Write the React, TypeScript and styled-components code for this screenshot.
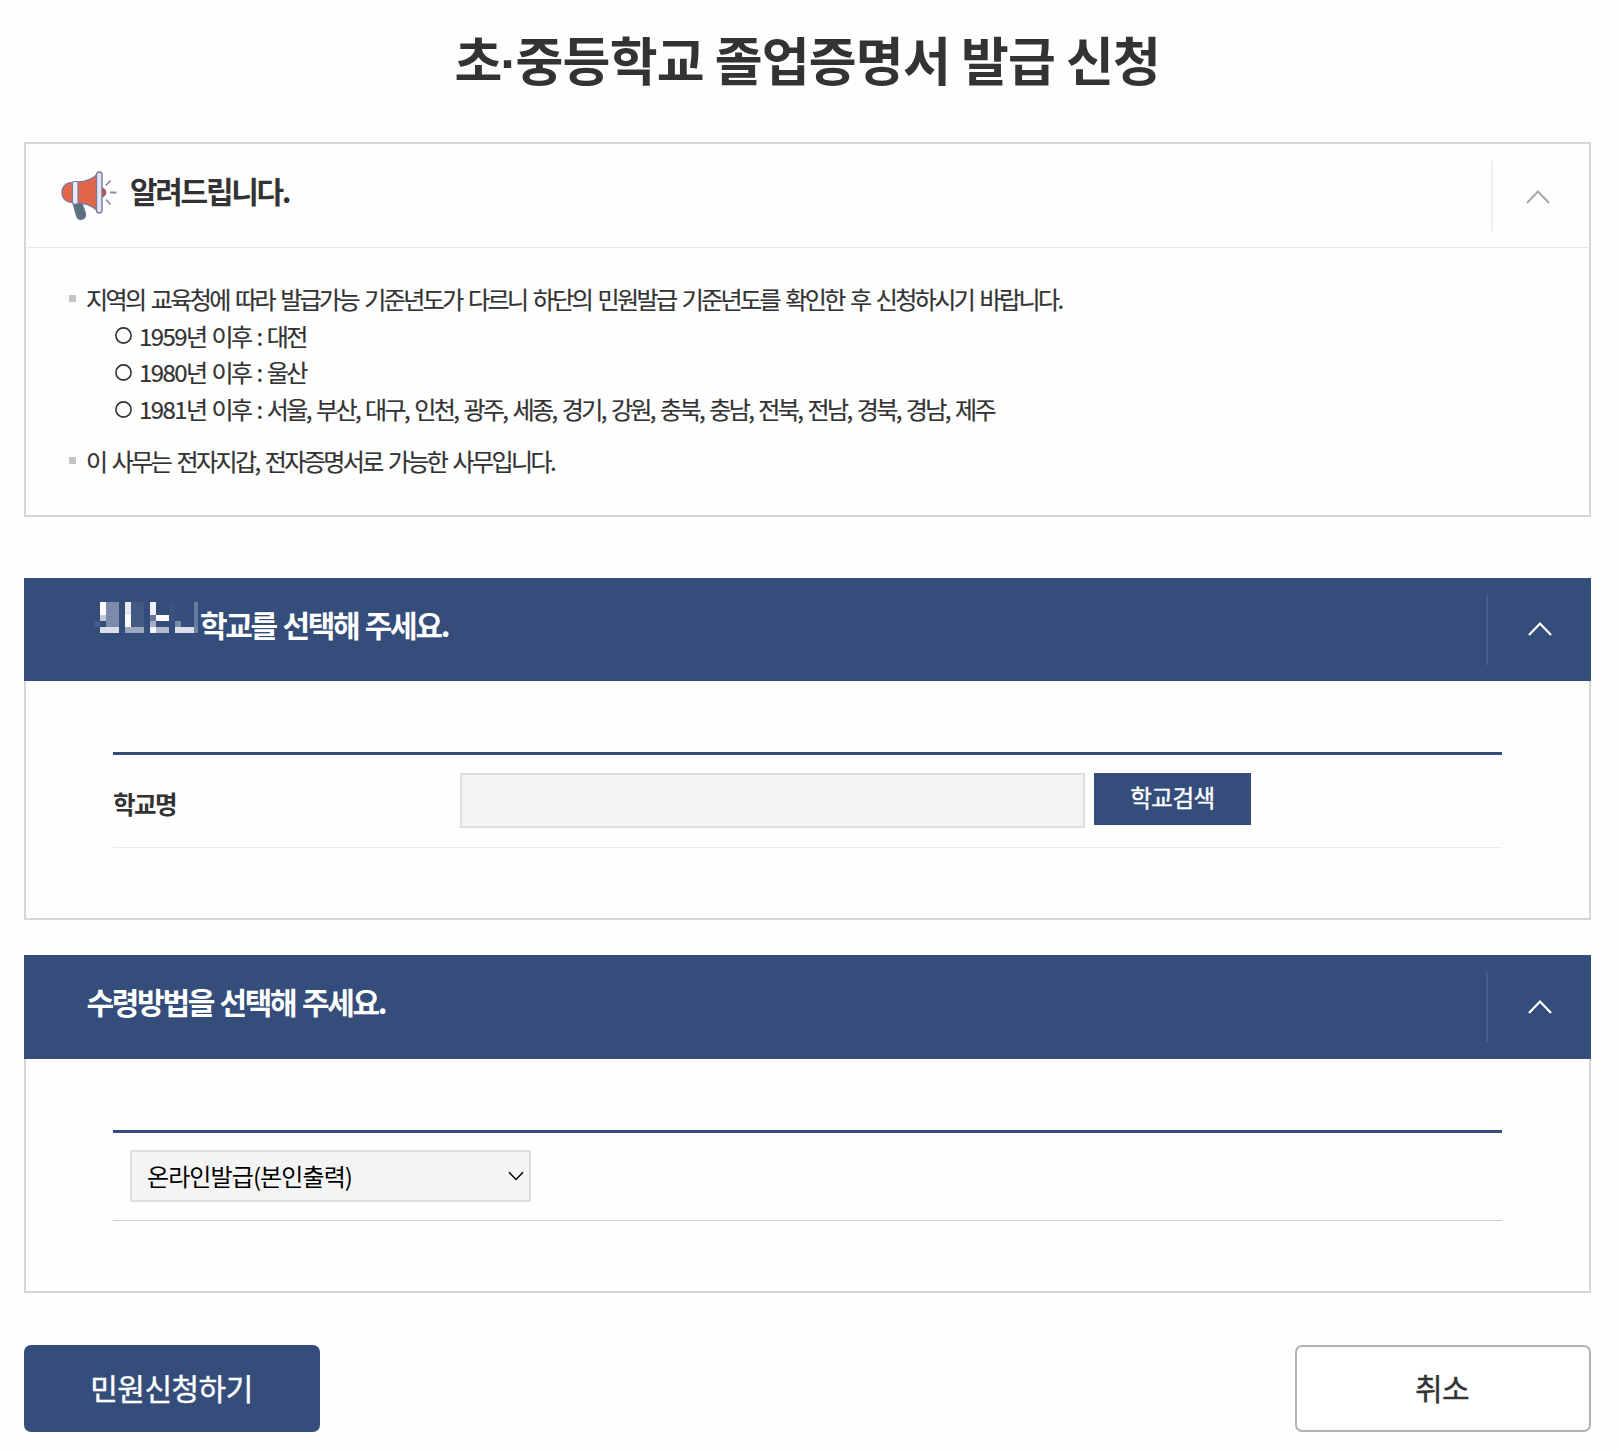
import { useState } from "react";
import styled, { createGlobalStyle, css } from "styled-components";

const GlobalStyle = createGlobalStyle`
  * {
    box-sizing: border-box;
  }

  body {
    margin: 0;
    background: #fefefe;
    color: #333;
    font-family: "Noto Sans CJK KR", sans-serif;
  }

  h1, h2, p, ul {
    margin: 0;
    padding: 0;
  }

  ul {
    list-style: none;
  }

  button, input, select {
    font-family: inherit;
  }
`;

const Page = styled.main`
  width: 1620px;
  height: 1452px;
  padding: 0 29.5px 0 24px;
`;

const PageTitle = styled.h1`
  height: 142px;
  padding-top: 21px;
  font-size: 52px;
  line-height: 76px;
  font-weight: 700;
  letter-spacing: -0.8px;
  text-align: center;
  white-space: nowrap;
`;

const MiddleDot = styled.span`
  margin: 0 -1.2px;
  font-family: "Liberation Sans", sans-serif;
  line-height: 1;
`;

const Panel = styled.section<{ $height: number; $gap: number }>`
  height: ${({ $height }) => $height}px;
  margin-bottom: ${({ $gap }) => $gap}px;
  border: 2px solid #d6d6d6;
  display: flex;
  flex-direction: column;
`;

const NoticeHeader = styled.header`
  height: 104px;
  padding: 17px 0 0 34.5px;
  border-bottom: 1px solid #e8e8e8;
  display: flex;
`;

const BlueHeader = styled.header<{ $indent: number; $height: number }>`
  height: ${({ $height }) => $height}px;
  margin: -2px -2px 0;
  padding: 17px 0 0 ${({ $indent }) => $indent}px;
  background: #344d7a;
  color: #fff;
  display: flex;
`;

const PanelTitle = styled.h2`
  flex: 1;
  font-size: 30px;
  line-height: 58px;
  font-weight: 700;
  letter-spacing: -2.3px;
  word-spacing: 2px;
  white-space: nowrap;
`;

const ToggleButton = styled.button<{ $blue?: boolean }>`
  width: 97.5px;
  height: 70px;
  padding: 1px 6px 0 0;
  border: 0;
  border-left: 2px solid #eee;
  background: none;
  color: #aaa;
  display: flex;
  align-items: center;
  justify-content: center;

  ${({ $blue }) =>
    $blue &&
    css`
      width: 104.5px;
      padding: 0 0 1px 1px;
      border-color: #485e87;
      color: #fff;
    `}
`;

const NoticeIcon = styled.svg`
  width: 56px;
  height: 50px;
  margin: 10px 13.5px 0 0;
`;

const Mosaic = styled.svg`
  width: 106px;
  height: 32px;
  margin-top: 7px;
`;

const NoticeList = styled.ul`
  padding: 33px 0 0 43px;
  font-size: 24px;
  line-height: 36.6px;
  letter-spacing: -2.6px;
  word-spacing: 3.5px;
  white-space: nowrap;
  -webkit-text-stroke: 0.2px;
`;

const NoticeItem = styled.li`
  margin-bottom: 15.5px;
  display: flex;

  &::before {
    content: "";
    width: 7px;
    height: 7px;
    margin: 14px 10px 0 0;
    background: #c4c4c4;
  }
`;

const YearLine = styled.p`
  padding-left: 29px;
  display: flex;
  align-items: center;
  white-space: pre;
  word-spacing: 3.35px;
`;

const YearBullet = styled.svg`
  width: 17px;
  height: 17px;
  margin-right: 7px;
`;

const YearNumber = styled.span`
  letter-spacing: -1.6px;
`;

const FormTable = styled.div<{ $height: number; $line: string }>`
  height: ${({ $height }) => $height}px;
  margin: 71px 87px 0 87px;
  border-top: 3.5px solid #344d7a;
  border-bottom: 1.5px solid ${({ $line }) => $line};
  display: flex;
  align-items: flex-start;
`;

const FieldLabel = styled.label`
  width: 347px;
  padding-top: 31px;
  font-size: 24.5px;
  line-height: 36px;
  font-weight: 700;
  letter-spacing: -1.5px;
`;

const SchoolInput = styled.input`
  width: 625px;
  height: 55px;
  margin: 18px 9px 0 0;
  border: 2px solid #dedede;
  background: #f4f4f4;
`;

const SearchButton = styled.button`
  width: 157px;
  height: 52px;
  margin-top: 18px;
  padding: 0 0 3px;
  border: 0;
  background: #344d7a;
  color: #fff;
  font-size: 23.5px;
  letter-spacing: -0.5px;
  -webkit-text-stroke: 0.4px;
`;

const SelectWrap = styled.div`
  position: relative;
  margin: 17px 0 0 17px;

  & > svg {
    position: absolute;
    top: 21px;
    right: 7px;
  }
`;

const MethodSelect = styled.select`
  width: 400.5px;
  height: 52px;
  padding: 0 0 1px 15px;
  border: 2px solid #dedede;
  border-radius: 0;
  background: #f4f4f4;
  color: #000;
  font-size: 24px;
  letter-spacing: -0.9px;
  appearance: none;
`;

const Actions = styled.footer`
  display: flex;
  justify-content: space-between;
`;

const ActionButton = styled.button<{ $primary?: boolean }>`
  width: 296px;
  height: 87px;
  padding: 0 1px 4px 0;
  border: 2px solid #b2b2b2;
  border-radius: 7px;
  background: #fff;
  color: #333;
  font-size: 30px;
  letter-spacing: -0.5px;
  -webkit-text-stroke: 0.4px;

  ${({ $primary }) =>
    $primary &&
    css`
      border-color: #344d7a;
      background: #344d7a;
      color: #fff;
    `}
`;

const ChevronUp = () => (
  <svg width="26" height="16" viewBox="0 0 26 16" fill="none">
    <path d="M2 14 13 2.5 24 14" stroke="currentColor" strokeWidth="2.2" />
  </svg>
);

const ChevronDown = () => (
  <svg width="16" height="10" viewBox="0 0 16 10" fill="none">
    <path d="M1 1.2 8 8.4 15 1.2" stroke="#000" strokeWidth="1.5" />
  </svg>
);

const Megaphone = () => (
  <NoticeIcon viewBox="0 0 56 50" fill="none">
    <path
      d="M12 32 20.5 31 24.5 42.5C25.5 48.5 17.5 50.5 15.5 45Z"
      fill="#5c6f7c"
      stroke="#6f7695"
      strokeWidth="1.2"
    />
    <path
      d="M40.5 16.5C46.5 18 46.5 25 40.5 26.5Z"
      fill="#c8484a"
      stroke="#6f7695"
      strokeWidth=".8"
    />
    <path
      d="M12 11.5C4.5 11.5 1 16 1 21.5S4.5 31.5 12 31.5Z"
      fill="#e0674a"
      stroke="#85779a"
      strokeWidth="1.3"
    />
    <path
      d="M16 10.8C25 11 31 8.500 36 3.500V39.500C31 34.500 25 32 16 32Z"
      fill="#e0674a"
      stroke="#85779a"
      strokeWidth="1.3"
    />
    <rect
      x="11.5"
      y="10.5"
      width="5.5"
      height="22.5"
      rx="1.5"
      fill="#e9eaf3"
      stroke="#777b9f"
      strokeWidth="1.2"
    />
    <rect
      x="35.5"
      y="1"
      width="5.5"
      height="41"
      rx="2.75"
      fill="#e3e4ee"
      stroke="#777b9f"
      strokeWidth="1.4"
    />
    <path
      d="M45 14.5 49.5 9.5M49 21.5H55.5M45 28.5 49.5 33.5"
      stroke="#8a8da8"
      strokeWidth="1.8"
    />
  </NoticeIcon>
);

// [x, y, width, height, colour]
const mosaicBlocks: [number, number, number, number, string][] = [
  [0, 19, 6, 6, "#465c87"],
  [6, 0, 6, 13, "#fff"],
  [6, 13, 6, 6, "#c3c8d8"],
  [12, 0, 13, 25, "#7a8aa8"],
  [6, 25, 19, 6, "#dcdfea"],
  [31, 0, 6, 13, "#e6e9f0"],
  [31, 13, 6, 12, "#fff"],
  [37, 0, 13, 25, "#435982"],
  [31, 25, 19, 6, "#9da6c0"],
  [56, 0, 6, 13, "#eef0f5"],
  [56, 13, 6, 6, "#66779b"],
  [62, 13, 13, 6, "#fff"],
  [56, 19, 6, 6, "#a6aec5"],
  [56, 25, 6, 6, "#f4f5fa"],
  [62, 25, 13, 6, "#b3b9d0"],
  [75, 0, 6, 19, "#3c527e"],
  [81, 19, 6, 6, "#7888a7"],
  [81, 25, 19, 6, "#dcdfea"],
  [100, 0, 4, 25, "#687b9e"],
  [100, 25, 4, 6, "#7484a5"],
];

const years = [
  { year: 1959, regions: "대전" },
  { year: 1980, regions: "울산" },
  {
    year: 1981,
    regions:
      "서울, 부산, 대구, 인천, 광주, 세종, 경기, 강원, 충북, 충남, 전북, 전남, 경북, 경남, 제주",
  },
];

const App = () => {
  const [school, setSchool] = useState("");

  return (
    <>
      <GlobalStyle />
      <Page>
        <PageTitle>
          초<MiddleDot>·</MiddleDot>중등학교 졸업증명서 발급 신청
        </PageTitle>

        <Panel $height={374.5} $gap={61}>
          <NoticeHeader>
            <Megaphone />
            <PanelTitle>알려드립니다.</PanelTitle>
            <ToggleButton>
              <ChevronUp />
            </ToggleButton>
          </NoticeHeader>
          <NoticeList>
            <NoticeItem>
              <div>
                <p>
                  지역의 교육청에 따라 발급가능 기준년도가 다르니 하단의
                  민원발급 기준년도를 확인한 후 신청하시기 바랍니다.
                </p>
                {years.map(({ year, regions }) => (
                  <YearLine key={year}>
                    <YearBullet viewBox="0 0 17 17" fill="none">
                      <circle
                        cx="8.5"
                        cy="8.5"
                        r="7.6"
                        stroke="#333"
                        strokeWidth="1.6"
                      />
                    </YearBullet>
                    <YearNumber>{year}</YearNumber>
                    <span>{`년 이후 : ${regions}`}</span>
                  </YearLine>
                ))}
              </div>
            </NoticeItem>
            <NoticeItem>
              <p>이 사무는 전자지갑, 전자증명서로 가능한 사무입니다.</p>
            </NoticeItem>
          </NoticeList>
        </Panel>

        <Panel $height={342} $gap={35.5}>
          <BlueHeader $indent={70} $height={103}>
            <Mosaic viewBox="0 0 106 32" shapeRendering="crispEdges">
              {mosaicBlocks.map(([x, y, width, height, fill]) => (
                <rect
                  key={`${x}-${y}`}
                  x={x}
                  y={y}
                  width={width}
                  height={height}
                  fill={fill}
                />
              ))}
            </Mosaic>
            <PanelTitle>학교를 선택해 주세요.</PanelTitle>
            <ToggleButton $blue>
              <ChevronUp />
            </ToggleButton>
          </BlueHeader>
          <FormTable $height={96} $line="#ebebeb">
            <FieldLabel htmlFor="school">학교명</FieldLabel>
            <SchoolInput
              id="school"
              value={school}
              onChange={(e) => setSchool(e.target.value)}
            />
            <SearchButton>학교검색</SearchButton>
          </FormTable>
        </Panel>

        <Panel $height={338} $gap={52}>
          <BlueHeader $indent={62.5} $height={104}>
            <PanelTitle>수령방법을 선택해 주세요.</PanelTitle>
            <ToggleButton $blue>
              <ChevronUp />
            </ToggleButton>
          </BlueHeader>
          <FormTable $height={91} $line="#ccc">
            <SelectWrap>
              <MethodSelect>
                <option>온라인발급(본인출력)</option>
              </MethodSelect>
              <ChevronDown />
            </SelectWrap>
          </FormTable>
        </Panel>

        <Actions>
          <ActionButton $primary>민원신청하기</ActionButton>
          <ActionButton>취소</ActionButton>
        </Actions>
      </Page>
    </>
  );
};

export default App;
